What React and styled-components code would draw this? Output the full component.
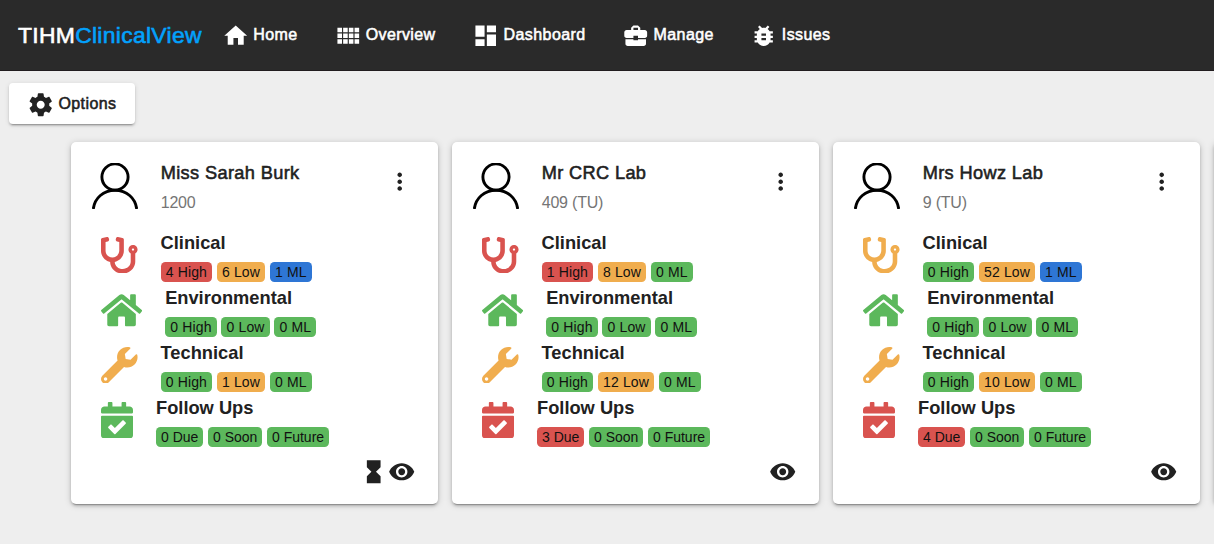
import React from 'react';
import styled, { createGlobalStyle } from 'styled-components';
import { FaStethoscope, FaWrench, FaCalendarCheck } from 'react-icons/fa';

const GlobalStyle = createGlobalStyle`
  *, *::before, *::after { box-sizing: border-box; }
  body {
    margin: 0;
    background: #eeeeee;
    color: #212121;
    font-family: "Liberation Sans", Arial, sans-serif;
    overflow: hidden;
  }
`;

const palette = {
  red: '#d9534f',
  orange: '#f0ad4e',
  green: '#5cb85c',
  blue: '#2e76d5',
};

const iconPaths = {
  home: 'M10 20v-6h4v6h5v-8h3L12 3 2 12h3v8z',
  overview:
    'M3 9h4V5H3v4zm0 5h4v-4H3v4zm5 0h4v-4H8v4zm5 0h4v-4h-4v4zM8 9h4V5H8v4zm5-4v4h4V5h-4zm5 9h4v-4h-4v4zM3 19h4v-4H3v4zm5 0h4v-4H8v4zm5 0h4v-4h-4v4zm5 0h4v-4h-4v4zm0-14v4h4V5h-4z',
  dashboard: 'M3 13h8V3H3v10zm0 8h8v-6H3v6zm10 0h8V11h-8v10zm0-18v6h8V3h-8z',
  manage:
    'M10 16v-1H3.01L3 19c0 1.11.89 2 2 2h14c1.11 0 2-.89 2-2v-4h-7v1h-4zm10-9h-4.01V5l-2-2h-4l-2 2v2H4c-1.1 0-2 .9-2 2v3c0 1.11.89 2 2 2h6v-2h4v2h6c1.1 0 2-.9 2-2V9c0-1.1-.9-2-2-2zm-6 0h-4V5h4v2z',
  issues:
    'M20 8h-2.81c-.45-.78-1.07-1.45-1.82-1.96L17 4.41 15.59 3l-2.17 2.17C12.96 5.06 12.49 5 12 5c-.49 0-.96.06-1.41.17L8.41 3 7 4.41l1.62 1.63C7.88 6.55 7.26 7.22 6.81 8H4v2h2.09c-.05.33-.09.66-.09 1v1H4v2h2v1c0 .34.04.67.09 1H4v2h2.81c1.04 1.79 2.97 3 5.19 3s4.15-1.21 5.19-3H20v-2h-2.09c.05-.33.09-.66.09-1v-1h2v-2h-2v-1c0-.34-.04-.67-.09-1H20V8zm-6 8h-4v-2h4v2zm0-4h-4v-2h4v2z',
  settings:
    'M19.43 12.98c.04-.32.07-.64.07-.98s-.03-.66-.07-.98l2.11-1.65c.19-.15.24-.42.12-.64l-2-3.46c-.12-.22-.39-.3-.61-.22l-2.49 1c-.52-.4-1.08-.73-1.69-.98l-.38-2.65C14.46 2.18 14.25 2 14 2h-4c-.25 0-.46.18-.49.42l-.38 2.65c-.61.25-1.17.59-1.69.98l-2.49-1c-.23-.09-.49 0-.61.22l-2 3.46c-.13.22-.07.49.12.64l2.11 1.65c-.04.32-.07.65-.07.98s.03.66.07.98l-2.11 1.65c-.19.15-.24.42-.12.64l2 3.46c.12.22.39.3.61.22l2.49-1c.52.4 1.08.73 1.69.98l.38 2.65c.03.24.24.42.49.42h4c.25 0 .46-.18.49-.42l.38-2.65c.61-.25 1.17-.59 1.69-.98l2.49 1c.23.09.49 0 .61-.22l2-3.46c.12-.22.07-.49-.12-.64l-2.11-1.65zM12 15.5c-1.93 0-3.5-1.57-3.5-3.5s1.57-3.5 3.5-3.5 3.5 1.57 3.5 3.5-1.57 3.5-3.5 3.5z',
  more: 'M12 8c1.1 0 2-.9 2-2s-.9-2-2-2-2 .9-2 2 .9 2 2 2zm0 2c-1.1 0-2 .9-2 2s.9 2 2 2 2-.9 2-2-.9-2-2-2zm0 6c-1.1 0-2 .9-2 2s.9 2 2 2 2-.9 2-2-.9-2-2-2z',
  hourglass: 'M6 2v6h.01L6 8.01 10 12l-4 4 .01.01H6V22h12v-5.99h-.01L18 16l-4-4 4-3.99-.01-.01H18V2H6z',
  eye: 'M12 4.5C7 4.5 2.73 7.61 1 12c1.73 4.39 6 7.5 11 7.5s9.27-3.11 11-7.5c-1.73-4.39-6-7.5-11-7.5zM12 17c-2.76 0-5-2.24-5-5s2.24-5 5-5 5 2.24 5 5-2.24 5-5 5zm0-8c-1.66 0-3 1.34-3 3s1.34 3 3 3 3-1.34 3-3-1.34-3-3-3z',
};

const IconSvg = styled.svg`
  display: block;
  flex: none;
  width: 27.43px;
  height: 27.43px;
  fill: currentColor;
`;

const Icon = ({ name }) => (
  <IconSvg viewBox="0 0 24 24" aria-hidden="true">
    <path d={iconPaths[name]} />
  </IconSvg>
);

const Page = styled.div`
  width: 100%;
  height: 544px;
  overflow: hidden;
`;

const NavBar = styled.header`
  display: flex;
  align-items: center;
  height: 71px;
  padding: 0 18px;
  background: #2a2a2a;
  border-bottom: 1px solid #211c1f;
  color: #ffffff;
`;

const Brand = styled.a`
  width: 203.9px;
  font-size: 22.9px;
  line-height: 28px;
  letter-spacing: 0.3px;
  -webkit-text-stroke: 0.6px currentColor;
  white-space: nowrap;
`;

const BrandAccent = styled.span`
  color: #03a1fc;
`;

const NavList = styled.nav`
  display: flex;
  gap: 36.57px;
  padding-top: 2px;
`;

const NavItem = styled.a`
  display: flex;
  align-items: center;
  gap: 4px;
`;

const ButtonLabel = styled.span`
  font-size: 16px;
  line-height: 20px;
  letter-spacing: 0.41px;
  -webkit-text-stroke: 0.55px currentColor;
  white-space: nowrap;
  padding-bottom: 2px;
`;

const Toolbar = styled.div`
  display: flex;
  padding: 12px 9px 0;
`;

const OptionsButton = styled.button`
  display: flex;
  align-items: center;
  justify-content: center;
  gap: 4.5px;
  width: 126px;
  height: 41px;
  padding: 2px 1px 0 0;
  border: 0;
  border-radius: 4px;
  background: #ffffff;
  color: #212121;
  font-family: inherit;
  box-shadow: 0 3px 1px -2px rgba(0, 0, 0, 0.2), 0 2px 2px rgba(0, 0, 0, 0.14), 0 1px 5px rgba(0, 0, 0, 0.12);
`;

const CardGrid = styled.main`
  display: flex;
  gap: 14px;
  padding: 18px 0 0 71px;
`;

const Card = styled.article`
  flex: none;
  display: flex;
  flex-direction: column;
  width: 367px;
  height: 362px;
  border-radius: 5px;
  background: #ffffff;
  box-shadow: 0 3px 1px -2px rgba(0, 0, 0, 0.22), 0 2px 3px rgba(0, 0, 0, 0.18), 0 1px 7px rgba(0, 0, 0, 0.18);
`;

const CardHeader = styled.header`
  display: flex;
  align-items: flex-start;
  height: 89px;
  padding: 19px 24.8px 0 21px;
`;

const AvatarSvg = styled.svg`
  flex: none;
  width: 46px;
  height: 46px;
  margin: 2px 22.7px 0 0;
  fill: none;
  stroke: #000000;
  stroke-width: 2.9;
`;

const Identity = styled.div`
  flex: 1;
`;

const PatientName = styled.h2`
  margin: 0;
  font-size: 18.2px;
  font-weight: 400;
  line-height: 24px;
  letter-spacing: 0.36px;
  -webkit-text-stroke: 0.55px currentColor;
`;

const PatientId = styled.p`
  margin: 8px 0 0;
  font-size: 16px;
  line-height: 20px;
  letter-spacing: -0.2px;
  color: #757575;
`;

const IconButton = styled.button`
  display: block;
  margin: ${({ $top }) => $top || 0}px 0 0;
  padding: 0;
  border: 0;
  background: none;
  color: #212121;
`;

const Section = styled.section`
  display: flex;
  align-items: flex-start;
  gap: 23px;
  height: 55px;
  padding-left: 30px;
`;

const SectionIcon = styled.span`
  display: flex;
  margin-top: 5.8px;
  color: ${({ $tone }) => palette[$tone]};

  svg {
    display: block;
    height: 36.57px;
    width: ${({ $width }) => $width}px;
    fill: currentColor;
  }
`;

const SectionTitle = styled.h3`
  margin: 0;
  font-size: 18.28px;
  font-weight: 700;
  line-height: 24px;
`;

const Chips = styled.div`
  display: flex;
  gap: 4.6px;
  margin-top: 7px;
`;

const Chip = styled.span`
  height: 20.4px;
  padding: 0 ${({ $compact }) => ($compact ? 5 : 5.2)}px;
  border-radius: 4.5px;
  background: ${({ $tone }) => palette[$tone]};
  color: #111111;
  font-size: 14px;
  line-height: 20px;
  letter-spacing: ${({ $compact }) => ($compact ? 0 : 0.13)}px;
  white-space: nowrap;
`;

const CardFooter = styled.footer`
  display: flex;
  justify-content: flex-end;
  padding: 6.8px 22.9px 0 0;
`;

const HouseIcon = () => (
  <svg viewBox="0 0 576 512" aria-hidden="true">
    <path d="M488 312.7V456c0 13.3-10.7 24-24 24H348c-6.6 0-12-5.4-12-12V356c0-6.6-5.4-12-12-12h-72c-6.6 0-12 5.4-12 12v112c0 6.6-5.4 12-12 12H112c-13.3 0-24-10.7-24-24V312.7c0-3.6 1.6-7 4.4-9.3l188-154.8c4.4-3.6 10.8-3.6 15.3 0l188 154.8c2.7 2.3 4.3 5.7 4.3 9.3zm83.6-60.9L488 182.9V44.4c0-6.6-5.4-12-12-12h-56c-6.6 0-12 5.4-12 12V117l-89.5-73.7c-17.7-14.6-43.3-14.6-61 0L4.4 251.8c-5.1 4.2-5.8 11.8-1.6 16.9l25.5 31c4.2 5.1 11.8 5.8 16.9 1.6l235.2-193.7c4.4-3.6 10.8-3.6 15.3 0l235.2 193.7c5.1 4.2 12.7 3.5 16.9-1.6l25.5-31c4.2-5.2 3.4-12.7-1.7-16.9z" />
  </svg>
);

const Avatar = () => (
  <AvatarSvg viewBox="0 0 46 46" aria-hidden="true">
    <circle cx="23" cy="14" r="13.1" />
    <path d="M1.3 46C2.6 35 11.5 27.2 23 27.2S43.4 35 44.7 46" />
  </AvatarSvg>
);

const sectionKinds = [
  { title: 'Clinical', icon: FaStethoscope, width: 36.57, units: ['High', 'Low', 'ML'] },
  { title: 'Environmental', icon: HouseIcon, width: 41.14, units: ['High', 'Low', 'ML'] },
  { title: 'Technical', icon: FaWrench, width: 36.57, units: ['High', 'Low', 'ML'] },
  { title: 'Follow Ups', icon: FaCalendarCheck, width: 32, units: ['Due', 'Soon', 'Future'], compact: true },
];

const activeTones = ['red', 'orange', 'blue'];

const patients = [
  { name: 'Miss Sarah Burk', id: '1200', waiting: true, counts: [[4, 6, 1], [0, 0, 0], [0, 1, 0], [0, 0, 0]] },
  { name: 'Mr CRC Lab', id: '409 (TU)', counts: [[1, 8, 0], [0, 0, 0], [0, 12, 0], [3, 0, 0]] },
  { name: 'Mrs Howz Lab', id: '9 (TU)', counts: [[0, 52, 1], [0, 0, 0], [0, 10, 0], [4, 0, 0]] },
];

const navItems = [
  ['home', 'Home'],
  ['overview', 'Overview'],
  ['dashboard', 'Dashboard'],
  ['manage', 'Manage'],
  ['issues', 'Issues'],
];

const toneFor = (count, index) => (count > 0 ? activeTones[index] : 'green');

const StatusSection = ({ kind, counts }) => {
  const Glyph = kind.icon;
  const worst = counts.findIndex((count) => count > 0);
  return (
    <Section>
      <SectionIcon $width={kind.width} $tone={worst < 0 ? 'green' : activeTones[worst]}>
        <Glyph />
      </SectionIcon>
      <div>
        <SectionTitle>{kind.title}</SectionTitle>
        <Chips>
          {counts.map((count, i) => (
            <Chip key={kind.units[i]} $tone={toneFor(count, i)} $compact={kind.compact}>
              {count} {kind.units[i]}
            </Chip>
          ))}
        </Chips>
      </div>
    </Section>
  );
};

const PatientCard = ({ patient }) => (
  <Card>
    <CardHeader>
      <Avatar />
      <Identity>
        <PatientName>{patient.name}</PatientName>
        <PatientId>{patient.id}</PatientId>
      </Identity>
      <IconButton aria-label="More" $top={7.4}>
        <Icon name="more" />
      </IconButton>
    </CardHeader>
    {sectionKinds.map((kind, i) => (
      <StatusSection key={kind.title} kind={kind} counts={patient.counts[i]} />
    ))}
    <CardFooter>
      {patient.waiting && <Icon name="hourglass" />}
      <IconButton aria-label="View">
        <Icon name="eye" />
      </IconButton>
    </CardFooter>
  </Card>
);

export default function App() {
  return (
    <Page>
      <GlobalStyle />
      <NavBar>
        <Brand>
          TIHM<BrandAccent>ClinicalView</BrandAccent>
        </Brand>
        <NavList>
          {navItems.map(([icon, label]) => (
            <NavItem key={icon}>
              <Icon name={icon} />
              <ButtonLabel>{label}</ButtonLabel>
            </NavItem>
          ))}
        </NavList>
      </NavBar>
      <Toolbar>
        <OptionsButton>
          <Icon name="settings" />
          <ButtonLabel>Options</ButtonLabel>
        </OptionsButton>
      </Toolbar>
      <CardGrid>
        {patients.map((patient) => (
          <PatientCard key={patient.id} patient={patient} />
        ))}
        <Card />
      </CardGrid>
    </Page>
  );
}
